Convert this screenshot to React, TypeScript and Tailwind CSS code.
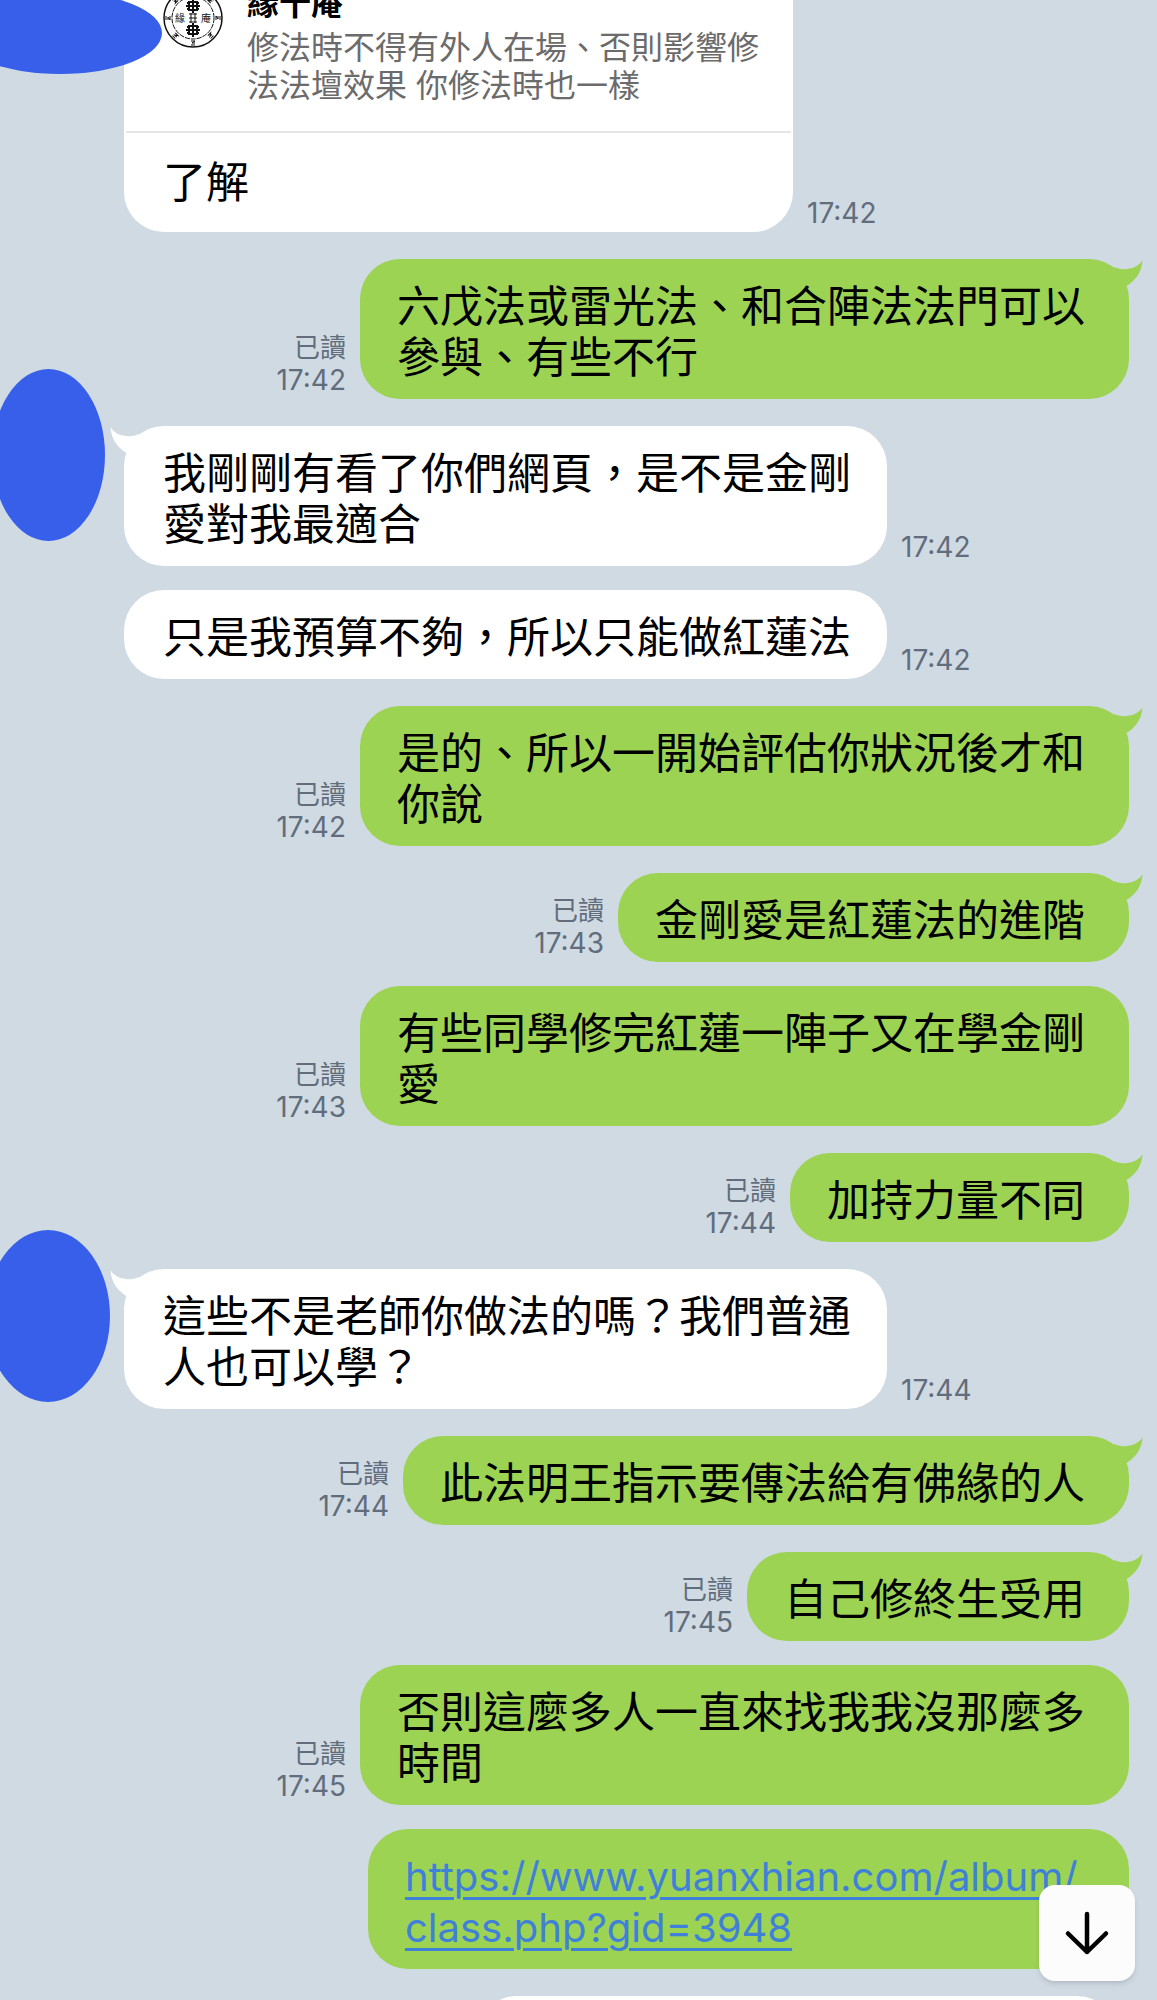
import clsx from 'clsx';

interface Message {
  id: number;
  from: 'me' | 'them';
  text: string;
  time?: string;
  read?: boolean;
  tail?: boolean;
  avatar?: string;
  href?: string;
}

const messages: Message[] = [
  { id: 1, from: 'me', text: '六戊法或雷光法、和合陣法法門可以\n參與、有些不行', time: '17:42', read: true, tail: true },
  {
    id: 2,
    from: 'them',
    text: '我剛剛有看了你們網頁，是不是金剛\n愛對我最適合',
    time: '17:42',
    tail: true,
    avatar: '-top-[57px] -left-2 w-[113px]',
  },
  { id: 3, from: 'them', text: '只是我預算不夠，所以只能做紅蓮法', time: '17:42' },
  { id: 4, from: 'me', text: '是的、所以一開始評估你狀況後才和\n你說', time: '17:42', read: true, tail: true },
  { id: 5, from: 'me', text: '金剛愛是紅蓮法的進階', time: '17:43', read: true, tail: true },
  { id: 6, from: 'me', text: '有些同學修完紅蓮一陣子又在學金剛\n愛', time: '17:43', read: true },
  { id: 7, from: 'me', text: '加持力量不同', time: '17:44', read: true, tail: true },
  {
    id: 8,
    from: 'them',
    text: '這些不是老師你做法的嗎？我們普通\n人也可以學？',
    time: '17:44',
    tail: true,
    avatar: '-top-[39px] -left-3.5 w-[124px]',
  },
  { id: 9, from: 'me', text: '此法明王指示要傳法給有佛緣的人', time: '17:44', read: true, tail: true },
  { id: 10, from: 'me', text: '自己修終生受用', time: '17:45', read: true, tail: true },
  { id: 11, from: 'me', text: '否則這麼多人一直來找我我沒那麼多\n時間', time: '17:45', read: true },
  {
    id: 12,
    from: 'me',
    text: 'https://www.yuanxhian.com/album/\nclass.php?gid=3948',
    href: 'https://www.yuanxhian.com/album/class.php?gid=3948',
  },
];

function Seal() {
  return (
    <svg viewBox="0 0 60 60" className="mt-[3px] size-[60px] shrink-0" fill="none" stroke="#111" aria-hidden="true">
      <circle cx="30" cy="30" r="29" strokeWidth="1.5" />
      <circle cx="30" cy="30" r="21" strokeWidth="1" strokeDasharray="5 1" />
      {[18, 42].map((y) => (
        <g key={y} strokeWidth="2">
          <path d={`M30 ${y - 7}v14M23 ${y}h14`} />
          <rect x="26" y={y - 4} width="8" height="8" />
          <path d={`M24 ${y - 3}h3M33 ${y - 3}h3M24 ${y + 3}h3M33 ${y + 3}h3`} />
        </g>
      ))}
      <path d="M26 26h8M26 30h8M26 34h8M28 25v10M32 25v10" strokeWidth="1" />
      {[0, 45, 90, 135, 180, 225, 270, 315].map((angle) => (
        <path key={angle} d="M28 53h4l-3 2h3M28 57h4" strokeWidth="1" transform={`rotate(${angle} 30 30)`} />
      ))}
      <g fill="#111" stroke="none" fontSize="10" fontFamily="Noto Sans CJK TC, sans-serif">
        <text x="12" y="34">緣</text>
        <text x="38" y="34">庵</text>
      </g>
    </svg>
  );
}

function Tail({ mine }: { mine: boolean }) {
  return (
    <svg
      viewBox="0 0 32 28"
      aria-hidden="true"
      className={clsx(
        'absolute top-px h-7 w-8',
        mine ? '-right-3.5 -scale-x-100 fill-[#9dd353]' : '-left-3.5 fill-white'
      )}
    >
      <path d="M.5 0C4 7 14 10 22 9Q26 8.500 29 7L30 27L16.500 26C8 21 1 12 .5 0Z" />
    </svg>
  );
}

function Meta({ time, read }: { time: string; read?: boolean }) {
  return (
    <div className="pb-[3px] text-right leading-8 text-[#616d7c]">
      {read && <p className="text-[26px]">已讀</p>}
      <time className="block text-[28px]">{time}</time>
    </div>
  );
}

function MessageRow({ message }: { message: Message }) {
  const mine = message.from === 'me';

  return (
    <li
      className={clsx(
        'relative flex items-end gap-3.5',
        mine ? 'flex-row-reverse pr-7' : 'pl-31',
        message.tail ? 'mt-[27px]' : 'mt-6'
      )}
    >
      {message.avatar && (
        <span className={clsx('absolute h-43 rounded-[50%] bg-[#375fea]', message.avatar)} />
      )}
      <div
        className={clsx(
          'relative rounded-[40px] pt-[22px] pb-4 text-[43px] leading-[51px] whitespace-pre-line text-black',
          mine ? 'bg-[#9dd353] pr-11 pl-[37px]' : 'bg-white pr-9 pl-[39px]',
          message.href && 'min-w-[761px]'
        )}
      >
        {message.tail && <Tail mine={mine} />}
        {message.href ? (
          <a
            href={message.href}
            className="block text-[40px] text-[#3f80d8] underline decoration-3 underline-offset-6"
          >
            {message.text}
          </a>
        ) : (
          <p>{message.text}</p>
        )}
      </div>
      {message.time && <Meta time={message.time} read={message.read} />}
    </li>
  );
}

export default function App() {
  return (
    <main
      lang="zh-Hant"
      className="relative h-screen overflow-hidden bg-[#d0dae3] font-['Inter','Noto_Sans_CJK_TC',sans-serif]"
    >
      <ol>
        <li className="relative -mt-12 flex items-end gap-3.5 pl-31">
          <div className="w-[669px] rounded-[40px] bg-white">
            <div className="mx-0.5 flex gap-6 border-b-2 border-[#e6e6e6] pt-[33px] pr-6 pb-[26px] pl-[37px]">
              <Seal />
              <div className="text-[32px] leading-[38px] text-[#6b6b6b]">
                <h2 className="mb-1.5 font-bold text-black">緣十庵</h2>
                <p>修法時不得有外人在場、否則影響修法法壇效果 你修法時也一樣</p>
              </div>
            </div>
            <p className="py-6 pl-[39px] text-[43px] leading-[51px] text-black">了解</p>
          </div>
          <Meta time="17:42" />
          <span className="absolute top-10 -left-[42px] h-[82px] w-51 rounded-[50%] bg-[#375fea]" />
        </li>

        {messages.map((message) => (
          <MessageRow key={message.id} message={message} />
        ))}

        <li className="mt-[27px] flex justify-end pr-10">
          <div className="h-35 w-[640px] rounded-[40px] bg-white" />
        </li>
      </ol>

      <button
        type="button"
        aria-label="捲動到最新訊息"
        className="absolute right-[22px] bottom-[19px] flex size-24 items-center justify-center rounded-2xl bg-[#fcfcfc] shadow-md"
      >
        <svg
          viewBox="0 0 48 48"
          className="size-12"
          fill="none"
          stroke="black"
          strokeWidth="4.500"
          strokeLinecap="round"
          strokeLinejoin="round"
        >
          <path d="M24 5v38M5 24.500l19 18.500l19-18.500" />
        </svg>
      </button>
    </main>
  );
}
